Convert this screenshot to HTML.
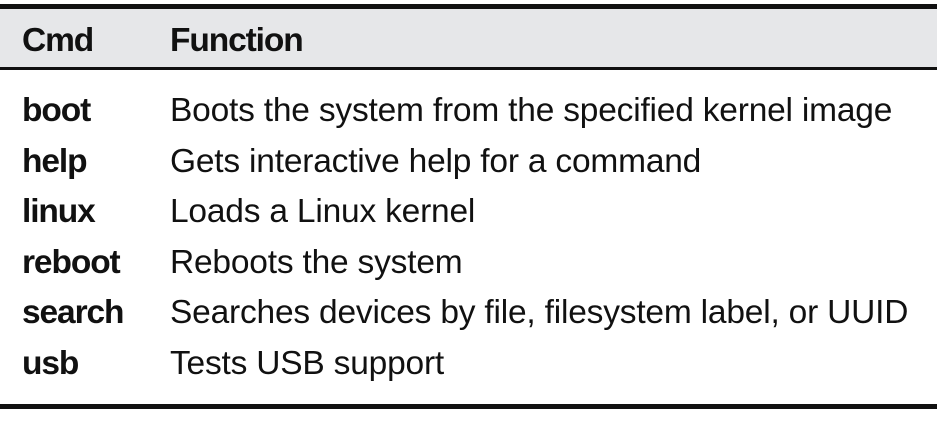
<!DOCTYPE html>
<html><head><style>
html,body{margin:0;padding:0;background:#fff;width:937px;height:428px;overflow:hidden;position:relative;font-family:"Liberation Sans",sans-serif;color:#111;}
.bar{position:absolute;left:0;width:937px;background:#111;}
.hd{position:absolute;left:0;top:9px;width:937px;height:58px;background:#e6e7e9;}
.t{position:absolute;font-size:33.5px;line-height:1;white-space:nowrap;letter-spacing:-0.2px;}
.b{font-weight:bold;letter-spacing:-1.1px;}
</style></head><body>
<div class="bar" style="top:4px;height:5px"></div>
<div class="hd"></div>
<div class="bar" style="top:67px;height:3px"></div>
<div class="bar" style="top:404px;height:5px"></div>
<div class="t b" style="left:22px;top:24px">Cmd</div>
<div class="t b" style="left:170px;top:24px">Function</div>

<div class="t b" style="left:22px;top:94px">boot</div>
<div class="t" style="left:170px;top:94px">Boots the system from the specified kernel image</div>
<div class="t b" style="left:22px;top:145px">help</div>
<div class="t" style="left:170px;top:145px">Gets interactive help for a command</div>
<div class="t b" style="left:22px;top:195px">linux</div>
<div class="t" style="left:170px;top:195px">Loads a Linux kernel</div>
<div class="t b" style="left:22px;top:246px">reboot</div>
<div class="t" style="left:170px;top:246px">Reboots the system</div>
<div class="t b" style="left:22px;top:296px">search</div>
<div class="t" style="left:170px;top:296px">Searches devices by file, filesystem label, or UUID</div>
<div class="t b" style="left:22px;top:347px">usb</div>
<div class="t" style="left:170px;top:347px">Tests USB support</div>
</body></html>
